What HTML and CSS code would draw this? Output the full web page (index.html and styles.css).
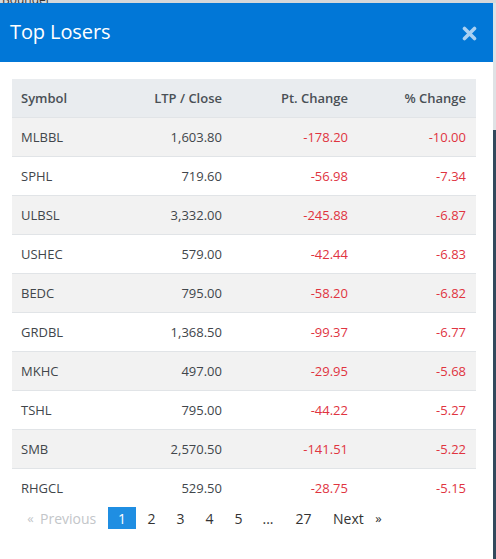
FILE: index.html
```html
<!DOCTYPE html>
<html>
<head>
<meta charset="utf-8">
<link rel="stylesheet" href="styles.css">
</head>
<body>
<div class="topstrip"><span class="bgtext">Bounder</span></div>
<div class="stage">
  <div class="modal">
    <div class="modal-header">
      <h1 class="title">Top Losers</h1>
      <span class="close" aria-label="close">
        <svg width="15" height="15" viewBox="0 0 15 15"><path d="M2.5 2.5 L12.5 12.5 M12.5 2.5 L2.5 12.5" stroke="#a9d0f2" stroke-width="3.6" stroke-linecap="round"/></svg>
      </span>
    </div>
    <div class="modal-body">
      <table class="losers">
        <colgroup>
          <col class="c1"><col class="c2"><col class="c3"><col class="c4">
        </colgroup>
        <thead>
          <tr><th class="left">Symbol</th><th>LTP / Close</th><th>Pt. Change</th><th>% Change</th></tr>
        </thead>
        <tbody>
          <tr><td class="left">MLBBL</td><td>1,603.80</td><td class="neg">-178.20</td><td class="neg">-10.00</td></tr>
          <tr><td class="left">SPHL</td><td>719.60</td><td class="neg">-56.98</td><td class="neg">-7.34</td></tr>
          <tr><td class="left">ULBSL</td><td>3,332.00</td><td class="neg">-245.88</td><td class="neg">-6.87</td></tr>
          <tr><td class="left">USHEC</td><td>579.00</td><td class="neg">-42.44</td><td class="neg">-6.83</td></tr>
          <tr><td class="left">BEDC</td><td>795.00</td><td class="neg">-58.20</td><td class="neg">-6.82</td></tr>
          <tr><td class="left">GRDBL</td><td>1,368.50</td><td class="neg">-99.37</td><td class="neg">-6.77</td></tr>
          <tr><td class="left">MKHC</td><td>497.00</td><td class="neg">-29.95</td><td class="neg">-5.68</td></tr>
          <tr><td class="left">TSHL</td><td>795.00</td><td class="neg">-44.22</td><td class="neg">-5.27</td></tr>
          <tr><td class="left">SMB</td><td>2,570.50</td><td class="neg">-141.51</td><td class="neg">-5.22</td></tr>
          <tr><td class="left">RHGCL</td><td>529.50</td><td class="neg">-28.75</td><td class="neg">-5.15</td></tr>
        </tbody>
      </table>
      <div class="pager">
        <span class="pg disabled arrow">«</span>
        <span class="pg disabled prev">Previous</span>
        <span class="pg num active">1</span>
        <span class="pg num">2</span>
        <span class="pg num">3</span>
        <span class="pg num">4</span>
        <span class="pg num">5</span>
        <span class="pg num dots">...</span>
        <span class="pg num wide">27</span>
        <span class="pg next">Next</span>
        <span class="pg arrow">»</span>
      </div>
    </div>
  </div>
  <div class="sidestrip"><div class="side-light"></div><div class="side-dark"></div></div>
</div>
</body>
</html>
```
FILE: styles.css
```css
html, body {
  margin: 0;
  padding: 0;
  background: #ffffff;
  overflow: hidden;
}
body {
  width: 496px;
  height: 559px;
  font-family: "Open Sans", "Noto Sans", sans-serif;
}
.topstrip {
  height: 3px;
  background: #d6d8da;
  overflow: hidden;
  position: relative;
}
.bgtext {
  position: absolute;
  left: 2px;
  top: -9px;
  font-size: 12px;
  color: #333;
}
.stage {
  display: flex;
  height: 556px;
}
.modal {
  width: 493px;
  background: #fff;
  display: flex;
  flex-direction: column;
}
.sidestrip {
  width: 3px;
  display: flex;
  flex-direction: column;
}
.side-light {
  height: 127px;
  background: #dfe2e5;
}
.side-dark {
  flex: 1;
  background: #33495d;
}
.modal-header {
  height: 59px;
  background: #0177d7;
  display: flex;
  align-items: center;
  justify-content: space-between;
  padding: 0 16px 0 10px;
}
.title {
  margin: 0;
  font-family: "Open Sans", sans-serif;
  font-weight: 400;
  font-size: 20px;
  color: #ffffff;
  letter-spacing: -0.1px;
  line-height: 1;
  padding-bottom: 2px;
}
.close {
  display: flex;
  width: 15px;
  height: 15px;
  margin-top: 1px;
}
.modal-body {
  padding: 17px 17px 0 12px;
}
.losers {
  width: 464px;
  border-collapse: collapse;
  table-layout: fixed;
  font-size: 13px;
  color: #41464b;
}
.c1 { width: 100px; }
.c2 { width: 120px; }
.c3 { width: 126px; }
.c4 { width: 118px; }
.losers th, .losers td {
  text-align: right;
  padding: 0 10px 0 9px;
  white-space: nowrap;
}
.losers th {
  height: 38px;
  background: #e9ecef;
  font-weight: 600;
  color: #4a5056;
}
.losers td {
  height: 38px;
  border-top: 1px solid #e1e4e7;
}
.losers tbody tr:nth-child(odd) td {
  background: #f2f2f2;
}
.losers .left {
  text-align: left;
}
.losers td.neg {
  color: #e0343f;
}
.pager {
  display: flex;
  align-items: center;
  height: 22px;
  padding-left: 9px;
  font-size: 14px;
  color: #333;
}
.pg {
  display: flex;
  align-items: center;
  justify-content: center;
  height: 22px;
}
.disabled {
  color: #c3c6c9;
}
.arrow {
  width: 19px;
  font-size: 13px;
}
.prev {
  width: 58px;
  justify-content: flex-start;
  margin-right: 10px;
}
.num {
  width: 29px;
}
.active {
  width: 28px;
  background: #1f8ee2;
  color: #ffffff;
  margin-right: 1px;
}
.dots {
  width: 30px;
  margin-right: 6px;
}
.wide {
  width: 29px;
}
.next {
  width: 36px;
  margin-left: 15px;
  justify-content: flex-start;
}
```
